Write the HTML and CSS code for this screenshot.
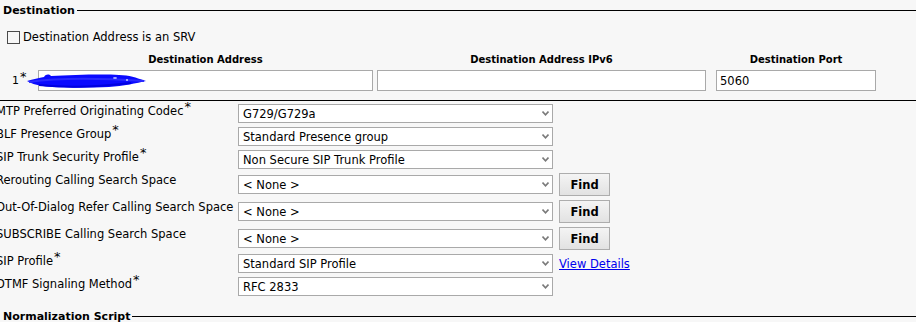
FILE: index.html
```html
<!DOCTYPE html>
<html lang="en">
<head>
    <meta charset="UTF-8">
    <title>SIP Trunk Configuration</title>
    <link rel="stylesheet" href="styles.css">
</head>
<body>
    <div class="legend"><span>Destination</span></div>

    <label class="srv">
        <input type="checkbox" class="check">
        Destination Address is an SRV
    </label>

    <div class="dest-grid">
        <div></div>
        <div class="col-head w1">Destination Address</div>
        <div class="col-head w2">Destination Address IPv6</div>
        <div class="col-head w3">Destination Port</div>

        <div class="row-num">1<span class="req">*</span></div>
        <div class="redacted">
            <input type="text" class="text-input w1">
            <svg class="scribble" width="120" height="14" viewBox="0 0 120 14">
                <path d="M0 7 C 6 5, 12 4, 17 3 C 19 0, 22 0, 24 2 C 45 1, 75 0, 92 1 C 102 1, 110 4, 116 6 L 119 7 C 110 9, 96 12, 82 13 C 60 14, 30 14, 16 12 C 8 11, 4 9, 0 7 Z" fill="#0a0aff"/>
                <path d="M2 8 C 30 4, 70 4, 117 7" stroke="#2a2aff" stroke-width="2" fill="none"/>
                <path d="M12 11 C 40 14, 70 13, 104 9" stroke="#0000e0" stroke-width="2" fill="none"/>
                <ellipse cx="88" cy="4" rx="2" ry="1" fill="#a8acff"/>
                <circle cx="100" cy="6" r="1" fill="#c8ccff"/>
            </svg>
        </div>
        <div><input type="text" class="text-input w2"></div>
        <div><input type="text" class="text-input w3" value="5060"></div>
    </div>

    <div class="fields">
        <div class="row">
            <div class="label">MTP Preferred Originating Codec<span class="req">*</span></div>
            <div class="control">
                <span class="select-wrap">
                    <select class="select"><option>G729/G729a</option></select>
                    <svg class="chevron" width="7" height="5" viewBox="0 0 7 5"><path d="M0.5 0.5 L3.5 3.8 L6.5 0.5" stroke="#7a7a7a" stroke-width="1.6" fill="none"/></svg>
                </span>
            </div>
        </div>
        <div class="row">
            <div class="label">BLF Presence Group<span class="req">*</span></div>
            <div class="control">
                <span class="select-wrap">
                    <select class="select"><option>Standard Presence group</option></select>
                    <svg class="chevron" width="7" height="5" viewBox="0 0 7 5"><path d="M0.5 0.5 L3.5 3.8 L6.5 0.5" stroke="#7a7a7a" stroke-width="1.6" fill="none"/></svg>
                </span>
            </div>
        </div>
        <div class="row">
            <div class="label">SIP Trunk Security Profile<span class="req">*</span></div>
            <div class="control">
                <span class="select-wrap">
                    <select class="select"><option>Non Secure SIP Trunk Profile</option></select>
                    <svg class="chevron" width="7" height="5" viewBox="0 0 7 5"><path d="M0.5 0.5 L3.5 3.8 L6.5 0.5" stroke="#7a7a7a" stroke-width="1.6" fill="none"/></svg>
                </span>
            </div>
        </div>
        <div class="row tall">
            <div class="label">Rerouting Calling Search Space</div>
            <div class="control">
                <span class="select-wrap">
                    <select class="select"><option>&lt; None &gt;</option></select>
                    <svg class="chevron" width="7" height="5" viewBox="0 0 7 5"><path d="M0.5 0.5 L3.5 3.8 L6.5 0.5" stroke="#7a7a7a" stroke-width="1.6" fill="none"/></svg>
                </span>
                <button class="find-btn">Find</button>
            </div>
        </div>
        <div class="row tall">
            <div class="label">Out-Of-Dialog Refer Calling Search Space</div>
            <div class="control">
                <span class="select-wrap">
                    <select class="select"><option>&lt; None &gt;</option></select>
                    <svg class="chevron" width="7" height="5" viewBox="0 0 7 5"><path d="M0.5 0.5 L3.5 3.8 L6.5 0.5" stroke="#7a7a7a" stroke-width="1.6" fill="none"/></svg>
                </span>
                <button class="find-btn">Find</button>
            </div>
        </div>
        <div class="row tall">
            <div class="label">SUBSCRIBE Calling Search Space</div>
            <div class="control">
                <span class="select-wrap">
                    <select class="select"><option>&lt; None &gt;</option></select>
                    <svg class="chevron" width="7" height="5" viewBox="0 0 7 5"><path d="M0.5 0.5 L3.5 3.8 L6.5 0.5" stroke="#7a7a7a" stroke-width="1.6" fill="none"/></svg>
                </span>
                <button class="find-btn">Find</button>
            </div>
        </div>
        <div class="row">
            <div class="label">SIP Profile<span class="req">*</span></div>
            <div class="control">
                <span class="select-wrap">
                    <select class="select"><option>Standard SIP Profile</option></select>
                    <svg class="chevron" width="7" height="5" viewBox="0 0 7 5"><path d="M0.5 0.5 L3.5 3.8 L6.5 0.5" stroke="#7a7a7a" stroke-width="1.6" fill="none"/></svg>
                </span>
                <a href="#" class="details-link">View Details</a>
            </div>
        </div>
        <div class="row">
            <div class="label">DTMF Signaling Method<span class="req">*</span></div>
            <div class="control">
                <span class="select-wrap">
                    <select class="select"><option>RFC 2833</option></select>
                    <svg class="chevron" width="7" height="5" viewBox="0 0 7 5"><path d="M0.5 0.5 L3.5 3.8 L6.5 0.5" stroke="#7a7a7a" stroke-width="1.6" fill="none"/></svg>
                </span>
            </div>
        </div>
    </div>

    <div class="legend legend-next"><span>Normalization Script</span></div>
</body>
</html>
```

FILE: styles.css
```css
body {
    margin: 0;
    padding-top: 3px;
    background-color: #f7f7f7;
    font-family: "DejaVu Sans", Verdana, sans-serif;
    font-size: 11.5px;
    color: #000;
    overflow: hidden;
}

.legend {
    display: flex;
    align-items: center;
    gap: 2px;
    height: 14px;
    padding-left: 3px;
    font-weight: bold;
    font-size: 11px;
}

.legend::after {
    content: '';
    flex: 1;
    border-top: 1px solid #000;
}

.legend-next {
    margin-top: 11px;
}

.srv {
    display: flex;
    align-items: center;
    gap: 3px;
    margin: 13px 0 0 7px;
    height: 14px;
}

.check {
    appearance: none;
    width: 13px;
    height: 13px;
    margin: 0;
    border: 1px solid #4a4a4a;
    background-color: transparent;
}

.dest-grid {
    display: grid;
    grid-template-columns: 38px 339px 339px 160px;
    row-gap: 4px;
    margin-top: 9px;
}

.col-head {
    font-size: 10px;
    font-weight: bold;
    text-align: center;
    line-height: 13px;
}

.w1 { width: 335px; }
.w2 { width: 329px; }
.w3 { width: 160px; }

.row-num {
    padding: 4px 0 0 12px;
    font-size: 11px;
}

.redacted {
    position: relative;
}

.scribble {
    position: absolute;
    left: -11px;
    top: 4px;
}

.text-input {
    box-sizing: border-box;
    height: 21px;
    margin: 0;
    border: 1px solid #a9a9a9;
    background-color: #fff;
    padding: 0 3px;
    font-family: inherit;
    font-size: inherit;
    color: #000;
    outline: none;
}

.req {
    font-size: 13px;
    vertical-align: top;
    line-height: 10px;
    position: relative;
    top: -2px;
    margin-left: 1px;
}

.fields {
    border-top: 1px solid #000;
    margin-top: 9px;
    padding-top: 1px;
}

.row {
    display: flex;
    align-items: flex-start;
    box-sizing: border-box;
    height: 23px;
    padding-top: 2px;
}

.row.tall {
    height: 27px;
}

.label {
    width: 242px;
    margin-left: -4px;
    white-space: nowrap;
    line-height: 15px;
}

.control {
    display: flex;
    align-items: center;
    gap: 6px;
    min-height: 19px;
}

.tall .control {
    min-height: 23px;
}

.select-wrap {
    position: relative;
    display: flex;
}

.select {
    appearance: none;
    box-sizing: border-box;
    width: 315px;
    height: 19px;
    margin: 0;
    border: 1px solid #a9a9a9;
    border-radius: 0;
    background-color: #fff;
    padding: 0 0 0 4px;
    font-family: inherit;
    font-size: inherit;
    color: #000;
}

.chevron {
    position: absolute;
    right: 4px;
    top: 7px;
    pointer-events: none;
}

.find-btn {
    box-sizing: border-box;
    width: 51px;
    height: 23px;
    margin: 0;
    border: 1px solid #adadad;
    background: linear-gradient(#f4f4f4, #e2e2e2);
    font-family: inherit;
    font-size: 11.5px;
    font-weight: bold;
    color: #000;
    cursor: pointer;
}

.details-link {
    color: #0000ee;
    text-decoration: underline;
}
```
